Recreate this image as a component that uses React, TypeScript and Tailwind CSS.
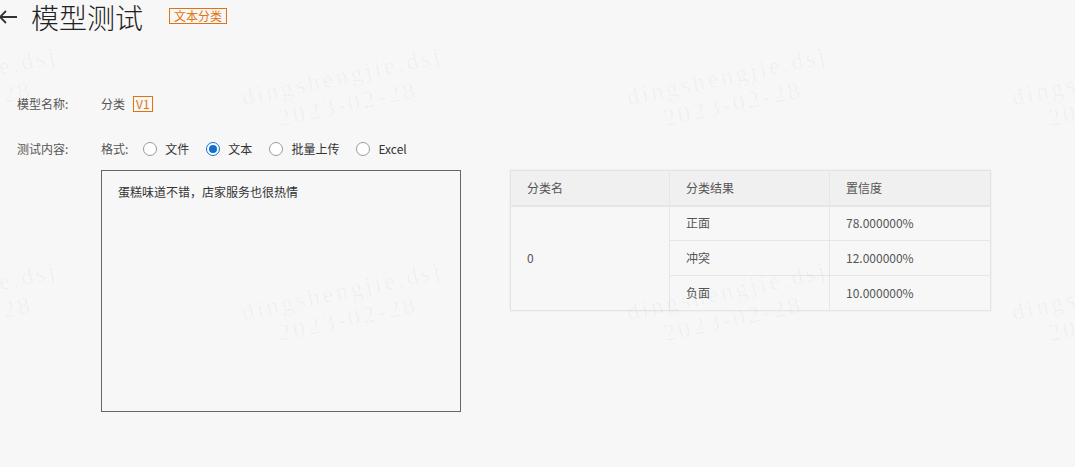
import React from "react";

const marks = [
  { x: -40, y: 90 },
  { x: 345, y: 90 },
  { x: 730, y: 90 },
  { x: 1115, y: 90 },
  { x: -40, y: 305 },
  { x: 345, y: 305 },
  { x: 730, y: 305 },
  { x: 1115, y: 305 },
];

const formats = [
  { label: "文件", checked: false },
  { label: "文本", checked: true },
  { label: "批量上传", checked: false },
  { label: "Excel", checked: false },
];

const results = [
  { name: "正面", score: "78.000000%" },
  { name: "冲突", score: "12.000000%" },
  { name: "负面", score: "10.000000%" },
];

const Radio = ({ checked }: { checked: boolean }) =>
  checked ? (
    <span className="w-[14px] h-[14px] rounded-full border border-[#0f6fcf] bg-white flex items-center justify-center">
      <span className="w-[8px] h-[8px] rounded-full bg-[#0f6fcf]"></span>
    </span>
  ) : (
    <span className="w-[14px] h-[14px] rounded-full border border-[#9a9a9a] bg-white"></span>
  );

const App = () => {
  return (
    <div
      className="relative w-[1075px] h-[467px] overflow-hidden bg-[#f7f7f7] text-[12px] text-[#333]"
      style={{ fontFamily: '"Noto Sans CJK SC", "Noto Sans", sans-serif' }}
    >
      {/* title */}
      <div className="flex items-center h-[34px]">
        <svg width="20" height="14" viewBox="0 0 20 14" className="ml-[-2px]">
          <path d="M19 7H2M8 1L2 7l6 6" fill="none" stroke="#333" strokeWidth="1.8" />
        </svg>
        <h1 className="ml-[13px] text-[28px] leading-none font-light text-[#222]">模型测试</h1>
        <span className="ml-[26px] mt-[-3px] border border-[#e2720f] text-[#e2720f] text-[12px] leading-[14px] px-[4px]">
          文本分类
        </span>
      </div>

      {/* form */}
      <div className="mt-[61px] flex items-center h-[18px]">
        <span className="w-[101px] pl-[17px] text-[#555]">模型名称:</span>
        <span className="text-[#555]">分类</span>
        <span className="ml-[8px] border border-[#e2720f] text-[#e2720f] text-[12px] leading-[14px] px-[2px]">V1</span>
      </div>

      <div className="mt-[27px] flex items-center h-[18px]">
        <span className="w-[101px] pl-[17px] text-[#555]">测试内容:</span>
        <span className="text-[#555]">格式:</span>
        <div className="ml-[15px] flex items-center gap-[17px]">
          {formats.map((f) => (
            <label key={f.label} className="flex items-center gap-[8px] text-[#333]">
              <Radio checked={f.checked} />
              <span>{f.label}</span>
            </label>
          ))}
        </div>
      </div>

      <div className="mt-[12px] flex items-start">
        <div className="ml-[101px] w-[360px] h-[242px] border border-[#666] px-[16px] py-[12px] text-[#333]">
          蛋糕味道不错，店家服务也很热情
        </div>

        <table className="ml-[49px] w-[481px] border border-[#e3e3e3] border-collapse shadow-[0_0_2px_rgba(0,0,0,0.08)] text-[#555]">
          <thead>
            <tr className="h-[35px] bg-[#f0f0f0]">
              <th className="w-[159px] text-left font-normal pl-[16px] border-b-2 border-[#e6e6e6]">分类名</th>
              <th className="w-[160px] text-left font-normal pl-[16px] border-b-2 border-l border-[#e6e6e6]">分类结果</th>
              <th className="text-left font-normal pl-[16px] border-b-2 border-l border-[#e6e6e6]">置信度</th>
            </tr>
          </thead>
          <tbody>
            {results.map((r, i) => (
              <tr key={r.name} className="h-[35px]">
                {i === 0 && (
                  <td rowSpan={3} className="pl-[16px] align-middle">
                    0
                  </td>
                )}
                <td className="pl-[16px] border-l border-b border-[#e6e6e6]">{r.name}</td>
                <td className="pl-[16px] border-l border-b border-[#e6e6e6]">{r.score}</td>
              </tr>
            ))}
          </tbody>
        </table>
      </div>

      {/* watermark */}
      {marks.map((m, i) => (
        <div
          key={i}
          className="absolute pointer-events-none flex flex-col items-center text-[24px] leading-[28px] tracking-[3px] text-[rgba(0,0,0,0.035)] rotate-[-12deg]"
          style={{ left: m.x - 120, top: m.y - 28, width: 240, fontFamily: '"Liberation Serif", serif' }}
        >
          <span>dingshengjie.dsj</span>
          <span>2023-02-28</span>
        </div>
      ))}
    </div>
  );
};

export default App;
